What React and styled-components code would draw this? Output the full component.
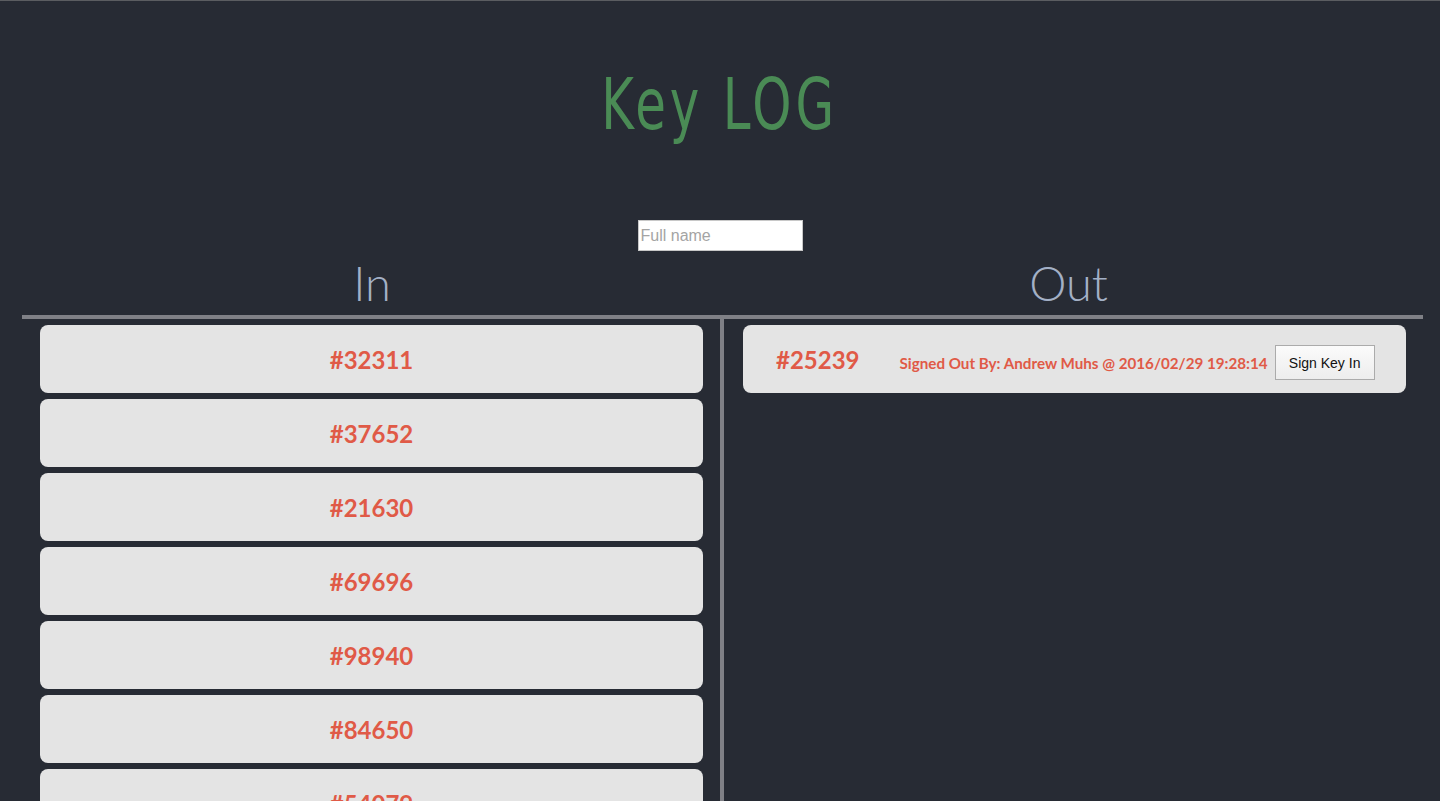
import React from 'react'
import styled, { createGlobalStyle } from 'styled-components'

const GlobalStyle = createGlobalStyle`
  html, body {
    margin: 0;
    padding: 0;
    background: #272b34;
  }
  body {
    border-top: 1px solid #5b5d61;
    font-family: Lato, "Liberation Sans", sans-serif;
    overflow: hidden;
    height: 800px;
  }
`

const Page = styled.div`
  display: flex;
  flex-direction: column;
  align-items: center;
`

const Title = styled.h1`
  margin: 61px 0 0;
  height: 158px;
  font-family: "DejaVu Sans", sans-serif;
  font-stretch: condensed;
  font-weight: normal;
  font-size: 72px;
  line-height: 84px;
  letter-spacing: 5px;
  color: #4a8b55;
  transform: scaleX(0.77);
`

const NameInput = styled.input`
  width: 165px;
  height: 31px;
  box-sizing: border-box;
  border: 1px solid #c8c8c8;
  padding: 0 2px;
  font-family: "Liberation Sans", Arial, sans-serif;
  font-size: 16px;
  color: #333;
  background: #fff;
  outline: none;
  &::placeholder {
    color: #a4a4a4;
  }
`

const Board = styled.div`
  align-self: stretch;
  margin: 0 17px 0 22px;
  display: grid;
  grid-template-columns: 702px 1fr;
`

const Heading = styled.h2`
  margin: 0;
  height: 64px;
  text-align: center;
  font-family: Lato, sans-serif;
  font-weight: 300;
  font-size: 47px;
  line-height: 64px;
  color: #a3b0c6;
  border-bottom: 4px solid #7f8086;
  padding-right: ${p => (p.left ? '2px' : '10px')};
`

const Column = styled.div`
  display: flex;
  flex-direction: column;
  gap: 6px;
  padding: 6px 17px 0 ${p => (p.left ? '18px' : '19px')};
  border-right: ${p => (p.left ? '4px solid #7f8086' : 'none')};
  min-height: 500px;
`

const Card = styled.div`
  height: 68px;
  box-sizing: border-box;
  border-radius: 8px;
  background: #e4e4e4;
  display: flex;
  align-items: center;
  justify-content: ${p => (p.spread ? 'flex-start' : 'center')};
  padding: ${p => (p.spread ? '0 31px 0 33px' : '0')};
`

const KeyNumber = styled.span`
  font-family: Lato, sans-serif;
  font-weight: 700;
  font-size: 24px;
  color: #e05a47;
`

const SignedText = styled.span`
  margin: 7px 0 0 40px;
  font-family: Lato, sans-serif;
  font-weight: 700;
  font-size: 15.2px;
  color: #e05a47;
`

const SignButton = styled.button`
  margin: 7px 0 0 7px;
  width: 100px;
  height: 35px;
  border: 1px solid #ababab;
  background: linear-gradient(#fbfbfb, #ededed);
  font-family: "Liberation Sans", Arial, sans-serif;
  font-size: 14px;
  color: #111;
  padding: 0;
`

const inKeys = ['32311', '37652', '21630', '69696', '98940', '84650', '54079']

const App = () => (
  <Page>
    <GlobalStyle />
    <Title>Key LOG</Title>
    <NameInput placeholder="Full name" />
    <Board>
      <Heading left>In</Heading>
      <Heading>Out</Heading>
      <Column left>
        {inKeys.map(k => (
          <Card key={k}>
            <KeyNumber>#{k}</KeyNumber>
          </Card>
        ))}
      </Column>
      <Column>
        <Card spread>
          <KeyNumber>#25239</KeyNumber>
          <SignedText>Signed Out By: Andrew Muhs @ 2016/02/29 19:28:14</SignedText>
          <SignButton>Sign Key In</SignButton>
        </Card>
      </Column>
    </Board>
  </Page>
)

export default App
